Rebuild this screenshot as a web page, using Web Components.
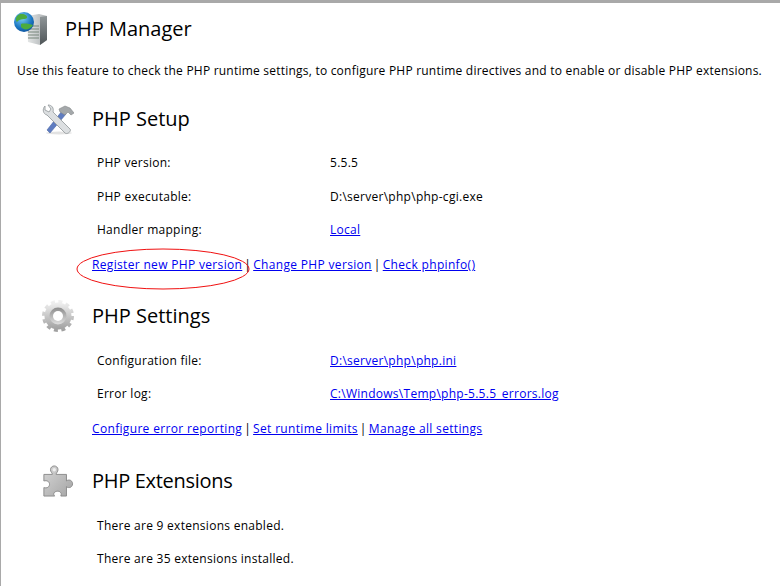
<!DOCTYPE html>
<html>
<head>
<meta charset="utf-8">
<title>PHP Manager</title>
<style>
html, body { margin: 0; height: 100%; background: #fff; overflow: hidden; }
body { font: 12px "Open Sans", "Noto Sans", sans-serif; color: #000; }
</style>
</head>
<body>

<template id="pageTemplate">
    <style>
        :host { display: block; box-sizing: border-box; height: 586px; border-top: 3px solid #a9a9a9; border-left: 1px solid #a9a9a9; padding: 0 0 0 12px; overflow: hidden; }
        header { display: flex; align-items: center; height: 48px; margin-top: 2px; gap: 17px; padding-left: 1px; }
        h1 { margin: 0; font-size: 20px; font-weight: 400; line-height: 48px; }
        p { margin: 0 0 22px; padding: 9px 0 0 4px; line-height: 18px; white-space: nowrap; font-size: 12px; letter-spacing: 0.22px; }
    </style>
    <header>
        <slot name="icon"></slot>
        <h1><slot name="title"></slot></h1>
    </header>
    <p><slot name="description"></slot></p>
    <slot></slot>
</template>

<template id="sectionTemplate">
    <style>
        :host { display: block; padding-left: 29px; }
        header { display: flex; align-items: center; height: 34px; gap: 18px; }
        h2 { margin: 0; font-size: 20px; font-weight: 400; line-height: 34px; }
        .body { padding: var(--body-top, 10.5px) 0 0 0; }
    </style>
    <header>
        <slot name="icon"></slot>
        <h2><slot name="title"></slot></h2>
    </header>
    <div class="body"><slot></slot></div>
</template>

<template id="rowTemplate">
    <style>
        :host { display: grid; grid-template-columns: 233px 1fr; height: 33.5px; align-items: center; padding-left: 55px; font-size: 12px; letter-spacing: 0.27px; white-space: nowrap; }
    </style>
    <div><slot name="label"></slot></div>
    <div><slot></slot></div>
</template>

<template id="linksTemplate">
    <style>
        :host { display: flex; position: relative; gap: 2px; height: 34px; margin-top: 1px; align-items: center; padding-left: 50px; font-size: 12px; letter-spacing: 0.33px; white-space: nowrap; }
    </style>
    <slot></slot>
</template>

<template id="linkTemplate">
    <style>
        :host { display: inline; color: #0000f0; text-decoration: underline; }
    </style>
    <slot></slot>
</template>

<template id="markTemplate">
    <style>
        :host { position: absolute; left: 34px; top: 0; display: block; width: 174px; height: 42px; pointer-events: none; }
        svg { display: block; }
    </style>
    <svg width="174" height="42" viewBox="0 0 174 42"><ellipse cx="87" cy="21" rx="86" ry="20" fill="none" stroke="#f01010" stroke-width="1"/></svg>
</template>

<php-page>
    <svg slot="icon" width="34" height="34" viewBox="0 0 34 34">
        <defs>
            <linearGradient id="srv" x1="0" x2="1" y1="0" y2="0"><stop offset="0" stop-color="#e6e8e8"/><stop offset="1" stop-color="#a9aeb0"/></linearGradient>
            <linearGradient id="srvSide" x1="0" x2="0" y1="0" y2="1"><stop offset="0" stop-color="#8f9698"/><stop offset="1" stop-color="#4f5558"/></linearGradient>
            <radialGradient id="globe" cx="0.4" cy="0.3" r="0.8"><stop offset="0" stop-color="#7fd0f2"/><stop offset="0.6" stop-color="#1c78c4"/><stop offset="1" stop-color="#0c4a92"/></radialGradient>
        </defs>
        <path d="M13 4 L25 2 L33 4 L33 28 L26 33 L14 30 Z" fill="url(#srv)"/>
        <path d="M26 5 L33 4 L33 28 L26 33 Z" fill="url(#srvSide)"/>
        <path d="M14 14h11M14 17h11M14 20h11M14 23h11M14 26h11" stroke="#76857a" stroke-width="1"/>
        <circle cx="10" cy="10" r="10" fill="url(#globe)"/>
        <path d="M5 2.500 C9 1 14 3 13 6 C11 8 6 6 3 10 C1 8 2 4 5 2.500 Z M7 12 C10 11 16 12 19 13 C16 18 10 19 7 15 Z" fill="#4cab3e"/>
    </svg>
    <span slot="title">PHP Manager</span>
    <span slot="description">Use this feature to check the PHP runtime settings, to configure PHP runtime directives and to enable or disable PHP extensions.</span>

    <php-section style="--body-top:10px">
        <svg slot="icon" width="32" height="32" viewBox="0 0 32 32">
            <ellipse cx="17" cy="30" rx="13" ry="1.500" fill="#e2e2e2"/>
            <path d="M5 27 L20 8 L24 11 L8 30 Z" fill="#5f7cc0" stroke="#4a66a6" stroke-width="0.6"/>
            <path d="M17 6 L23 3 L28 5 L32 10 L29 12 L26 9 L23 12 L18 9 Z" fill="#a4a8aa" stroke="#84888a" stroke-width="0.6"/>
            <path d="M3 3 C0 6 1 11 5 12 L23 30 C25 32 30 28 28 26 L11 9 C12 5 10 2 6 2 L9 6 L7 9 L3 7 Z" fill="#dcdfe1" stroke="#9a9fa2" stroke-width="0.9"/>
        </svg>
        <span slot="title">PHP Setup</span>
        <php-row><span slot="label">PHP version:</span>5.5.5</php-row>
        <php-row><span slot="label">PHP executable:</span>D:\server\php\php-cgi.exe</php-row>
        <php-row><span slot="label">Handler mapping:</span><php-link>Local</php-link></php-row>
        <php-links>
            <php-link>Register new PHP version</php-link> | <php-link>Change PHP version</php-link> | <php-link>Check phpinfo()</php-link>
            <php-mark></php-mark>
        </php-links>
    </php-section>

    <php-section style="margin-top:17.5px">
        <svg slot="icon" width="32" height="34" viewBox="0 0 32 34">
            <defs>
                <linearGradient id="gear" x1="0" x2="0" y1="0" y2="1"><stop offset="0" stop-color="#f0f0f0"/><stop offset="1" stop-color="#a0a0a0"/></linearGradient>
                <linearGradient id="gearIn" x1="0" x2="0" y1="0" y2="1"><stop offset="0" stop-color="#8c8c8c"/><stop offset="1" stop-color="#e0e0e0"/></linearGradient>
            </defs>
            <circle cx="16" cy="17" r="14.500" fill="none" stroke="url(#gear)" stroke-width="3" stroke-dasharray="4 3.590"/>
            <circle cx="16" cy="17" r="13.500" fill="url(#gear)"/>
            <circle cx="16" cy="17" r="8.500" fill="url(#gearIn)"/>
            <circle cx="16" cy="17" r="5" fill="#fff"/>
        </svg>
        <span slot="title">PHP Settings</span>
        <php-row><span slot="label">Configuration file:</span><php-link>D:\server\php\php.ini</php-link></php-row>
        <php-row><span slot="label">Error log:</span><php-link>C:\Windows\Temp\php-5.5.5_errors.log</php-link></php-row>
        <php-links>
            <php-link>Configure error reporting</php-link> | <php-link>Set runtime limits</php-link> | <php-link>Manage all settings</php-link>
        </php-links>
    </php-section>

    <php-section style="margin-top:18.5px">
        <svg slot="icon" width="32" height="32" viewBox="0 0 32 34">
            <defs><linearGradient id="puz" x1="0" x2="1" y1="0" y2="1"><stop offset="0" stop-color="#d6d6d6"/><stop offset="1" stop-color="#a4a4a4"/></linearGradient></defs>
            <path d="M1 10 H10 C10 8 8 7.500 8 5 C8 2.500 10 1 12 1 C14 1 16 2.500 16 5 C16 7.500 14 8 14 10 H25 V17 C26 16 27 16 28 16 C30 16 31.500 18 31.500 20 C31.500 22 30 24 28 24 C27 24 26 24 25 23 V33 H19 C19.500 31 20 30 18 28.500 C16 27 12 28 11.500 30.500 C11.300 32 12 32 12.500 33 H1 V24 C4 25 7 23.500 7 20.500 C7 17.500 4 16 1 17 Z" fill="url(#puz)" stroke="#8a8a8a" stroke-width="1"/>
            <circle cx="12" cy="5" r="1.800" fill="#efefef"/>
        </svg>
        <span slot="title" style="letter-spacing:-0.3px">PHP Extensions</span>
        <php-row><span slot="label">There are 9 extensions enabled.</span></php-row>
        <php-row><span slot="label">There are 35 extensions installed.</span></php-row>
    </php-section>
</php-page>

<script>
'use strict'

// Every element here is just a template in an open shadow root.
function defineFromTemplate(name, templateId) {
    customElements.define(name, class extends HTMLElement {
        constructor() {
            super()
            let clonedTemplate = document.importNode(document.getElementById(templateId).content, true)
            this.attachShadow({ mode: 'open' }).appendChild(clonedTemplate)
        }
    })
}

defineFromTemplate('php-page', 'pageTemplate')
defineFromTemplate('php-section', 'sectionTemplate')
defineFromTemplate('php-row', 'rowTemplate')
defineFromTemplate('php-links', 'linksTemplate')
defineFromTemplate('php-link', 'linkTemplate')
defineFromTemplate('php-mark', 'markTemplate')
</script>
</body>
</html>
